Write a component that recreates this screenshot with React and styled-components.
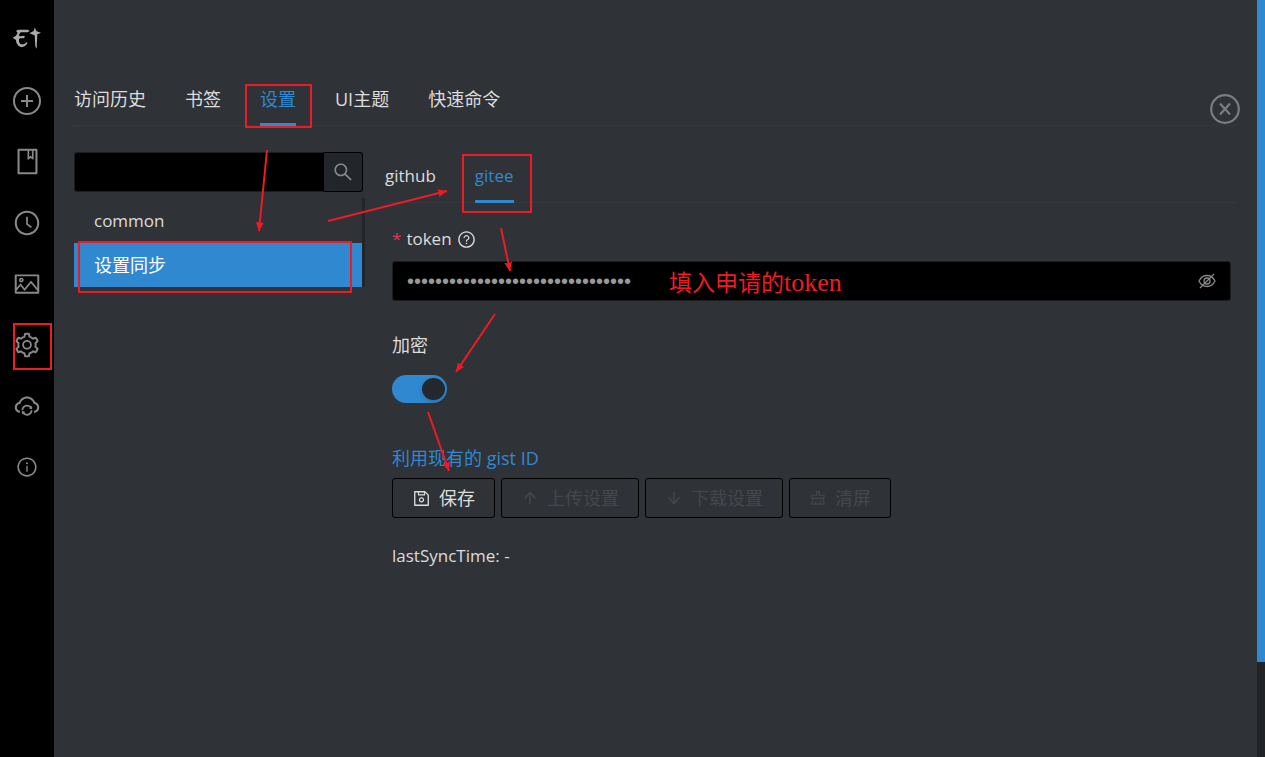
import React, { useState } from "react";
import styled, { createGlobalStyle, css } from "styled-components";
import {
  AiOutlineBook,
  AiOutlineClockCircle,
  AiOutlinePicture,
  AiOutlineSetting,
  AiOutlineCloudSync,
  AiOutlineInfoCircle,
  AiOutlineSearch,
  AiOutlineQuestionCircle,
  AiOutlineSave,
  AiOutlineArrowUp,
  AiOutlineArrowDown,
  AiOutlineClear,
} from "react-icons/ai";

const color = {
  black: "#000",
  main: "#2f3237",
  darker: "#22252a",
  line: "#35383d",
  text: "#ddd",
  muted: "#888",
  disabled: "#45484b",
  primary: "#3088d0",
  red: "#ed1c24",
};

const GlobalStyle = createGlobalStyle`
  * { box-sizing: border-box; }
  body {
    margin: 0;
    background: ${color.main};
    color: ${color.text};
    font: 18px/28px "Open Sans", "Noto Sans CJK SC", sans-serif;
  }
  button, input { font: inherit; color: inherit; margin: 0; }
  svg { display: block; flex: none; }
`;

const Page = styled.div`
  position: relative;
  display: flex;
  min-height: 100vh;
`;

const Sidebar = styled.nav`
  flex: none;
  width: 54px;
  background: ${color.black};
  display: flex;
  flex-direction: column;
`;

const LogoLink = styled.a`
  height: 70px;
  padding: 27px 0 0 12px;
`;

const SideButton = styled.button`
  height: 61px;
  padding: 0;
  border: 0;
  background: none;
  color: ${color.muted};
  display: flex;
  align-items: center;
  justify-content: center;
`;

const Content = styled.main`
  position: relative;
  flex: 1;
  min-width: 0;
  padding: 73px 20px 40px;
`;

const ScrollTrack = styled.div`
  flex: none;
  width: 8px;
  background: #222327;
`;

const ScrollThumb = styled.div`
  height: 87.5%;
  background: ${color.primary};
`;

const TabBar = styled.div`
  display: flex;
  gap: 39px;
  border-bottom: 1px solid ${color.line};
`;

const Tab = styled.button`
  position: relative;
  height: 52px;
  padding: 0;
  border: 0;
  background: none;
  white-space: nowrap;
  ${(p) =>
    p.$active &&
    css`
      color: ${color.primary};
      &::after {
        content: "";
        position: absolute;
        left: 0;
        right: 0;
        bottom: -1px;
        height: 3px;
        background: ${color.primary};
      }
    `}
`;

const CloseButton = styled.button`
  position: absolute;
  top: 94px;
  right: 17px;
  padding: 0;
  border: 0;
  background: none;
  color: #7c7d7f;
`;

const Columns = styled.div`
  display: flex;
  gap: 20px;
  padding-top: 26px;
`;

const ListColumn = styled.section`
  flex: none;
  width: 291px;
`;

const SearchBox = styled.form`
  display: flex;
  height: 40px;
  width: 289px;
  margin-bottom: 6px;
`;

const SearchInput = styled.input`
  flex: 1;
  min-width: 0;
  padding: 0 12px;
  background: ${color.black};
  border: 1px solid #1c1d1f;
  border-right: 0;
  border-radius: 3px 0 0 3px;
  outline: 0;
`;

const SearchButton = styled.button`
  width: 39px;
  padding: 0;
  display: flex;
  align-items: center;
  justify-content: center;
  color: ${color.muted};
  background: ${color.darker};
  border: 1px solid ${color.black};
  border-left: 0;
  border-radius: 0 3px 3px 0;
`;

const ItemList = styled.div`
  display: flex;
  flex-direction: column;
  padding-top: 1px;
  border-right: 3px solid ${color.darker};
`;

const Item = styled.button`
  height: 44px;
  padding: 0 20px;
  border: 0;
  text-align: left;
  font-size: ${(p) => (p.$latin ? "17px" : "18px")};
  color: ${(p) => (p.$active ? "#fff" : color.text)};
  background: ${(p) => (p.$active ? color.primary : "none")};
`;

const Detail = styled.section`
  flex: 1;
  min-width: 0;
`;

const DetailTabs = styled(TabBar)`
  height: 51px;
`;

const DetailTab = styled(Tab)`
  height: 50px;
  padding-bottom: 3px;
  font-size: 17px;
`;

const Form = styled.form`
  display: flex;
  flex-direction: column;
  align-items: flex-start;
  padding: 22px 6px 0 7px;
`;

const Label = styled.label`
  display: flex;
  align-items: center;
  gap: 5px;
  font-size: ${(p) => (p.$latin ? "17px" : "18px")};
`;

const Required = styled.span`
  color: #e0364f;
`;

const TokenField = styled.div`
  display: flex;
  align-items: center;
  width: 100%;
  height: 40px;
  margin: 8px 0 30px;
  padding: 0 14px;
  background: ${color.black};
  border: 1px solid #1c1d1f;
  border-radius: 3px;
`;

const TokenInput = styled.input`
  flex: 1;
  min-width: 0;
  height: 100%;
  padding: 0;
  color: #999;
  font: 20px "Liberation Sans", sans-serif;
  background: none;
  border: 0;
  outline: 0;
`;

const IconButton = styled.button`
  padding: 0;
  border: 0;
  background: none;
  color: ${color.muted};
`;

const Switch = styled.input`
  appearance: none;
  width: 55px;
  height: 28px;
  padding: 3px 2px;
  margin: 16px 0 41px;
  border-radius: 14px;
  display: flex;
  background: ${(p) => (p.checked ? color.primary : color.darker)};
  justify-content: ${(p) => (p.checked ? "flex-end" : "flex-start")};
  &::before {
    content: "";
    width: 23px;
    height: 22px;
    border-radius: 50%;
    background: ${(p) => (p.checked ? "#22282d" : color.muted)};
    box-shadow: 0 2px 4px rgba(0, 35, 11, 0.2);
  }
`;

const GistLink = styled.a`
  color: ${color.primary};
  text-decoration: none;
`;

const ButtonRow = styled.div`
  display: flex;
  gap: 6px;
  margin: 6px 0 24px;
`;

const ActionButton = styled.button`
  display: flex;
  align-items: center;
  gap: 8px;
  height: 40px;
  padding: 0 19px;
  background: none;
  border: 1px solid ${color.black};
  border-radius: 3px;
  white-space: nowrap;
  &:disabled { color: ${color.disabled}; }
`;

const SyncTime = styled.div`
  font-size: 17px;
`;

const Markup = styled.svg`
  position: absolute;
  top: 0;
  left: 0;
  pointer-events: none;
`;

const Note = styled.div`
  position: absolute;
  top: 268px;
  left: 669px;
  display: flex;
  align-items: baseline;
  color: ${color.red};
  font-size: 23px;
  pointer-events: none;
`;

const NoteLatin = styled.span`
  font-family: "Liberation Serif", serif;
  font-size: 26px;
`;

function Logo() {
  return (
    <svg width="30" height="23" viewBox="36 82 90 69" fill="#aaa">
      <path d="M48 94 L55 90 L84 90 L89 94 L83 98 L62 98 L56 106 L60 110 L72 108 L75 112 L71 116 L60 116 L57 119 L57 127 L62 134 L72 134 L81 127 L82 132 L74 140 L64 143 L55 138 L49 129 L48 121 L38 114 L48 108 L53 99 Z" />
      <path d="M104 84 L110 95 L123 99 L112 104 L110 147 L106 141 L104 107 L88 101 L101 94 Z" />
    </svg>
  );
}

function PlusIcon() {
  return (
    <svg width="28" height="28" viewBox="0 0 28 28" fill="none" stroke="currentColor" strokeWidth="2">
      <circle cx="14" cy="14" r="13" />
      <path d="M14 8v12M8 14h12" />
    </svg>
  );
}

function CloseIcon() {
  return (
    <svg width="30" height="30" viewBox="0 0 30 30" fill="none" stroke="currentColor" strokeWidth="2.2">
      <circle cx="15" cy="15" r="13.8" />
      <path d="M10 9.500l10 11M20 9.500l-10 11" />
    </svg>
  );
}

function EyeOffIcon() {
  return (
    <svg width="18" height="18" viewBox="0 0 18 18" fill="none" stroke="currentColor" strokeWidth="1.3">
      <path d="M1 9C3 5 6 3.500 9 3.500S15 5 17 9c-2 4-5 5.500-8 5.500S3 13 1 9z" />
      <circle cx="9" cy="9" r="3" />
      <path d="M2 16L16 2" />
    </svg>
  );
}

const sideItems = [
  ["新建", <PlusIcon />],
  ["书签", <AiOutlineBook size={29} />],
  ["历史", <AiOutlineClockCircle size={28} />],
  ["主题", <AiOutlinePicture size={28} />],
  ["设置", <AiOutlineSetting size={28} />],
  ["同步", <AiOutlineCloudSync size={28} />],
  ["关于", <AiOutlineInfoCircle size={22} />],
];

const boxes = [
  [246, 85, 65, 42],
  [79, 242, 272, 50],
  [463, 155, 68, 57],
  [14, 324, 37, 45],
];

const arrows = [
  [267, 150, 259, 231],
  [328, 221, 447, 191],
  [501, 228, 510, 271],
  [495, 314, 456, 372],
  [428, 412, 449, 471],
];

function Annotations() {
  return (
    <Markup width="900" height="500" fill="none" stroke={color.red} strokeWidth="2" aria-hidden="true">
      <defs>
        <marker id="head" markerUnits="userSpaceOnUse" markerWidth="10" markerHeight="8" refX="9" refY="4" orient="auto">
          <path d="M0 0L9 4L0 8L1 4Z" fill={color.red} stroke="none" />
        </marker>
      </defs>
      {boxes.map(([x, y, w, h]) => (
        <rect key={x} x={x} y={y} width={w} height={h} />
      ))}
      {arrows.map(([x1, y1, x2, y2]) => (
        <line key={x1} x1={x1} y1={y1} x2={x2} y2={y2} markerEnd="url(#head)" />
      ))}
    </Markup>
  );
}

export default function App() {
  const [tab, setTab] = useState("设置");
  const [item, setItem] = useState("设置同步");
  const [service, setService] = useState("gitee");
  const [encrypt, setEncrypt] = useState(true);
  const [hidden, setHidden] = useState(true);

  return (
    <Page>
      <GlobalStyle />
      <Sidebar>
        <LogoLink href="#" aria-label="electerm">
          <Logo />
        </LogoLink>
        {sideItems.map(([name, icon]) => (
          <SideButton key={name} aria-label={name}>
            {icon}
          </SideButton>
        ))}
      </Sidebar>
      <Content>
        <TabBar role="tablist">
          {["访问历史", "书签", "设置", "UI主题", "快速命令"].map((t) => (
            <Tab key={t} role="tab" $active={t === tab} aria-selected={t === tab} onClick={() => setTab(t)}>
              {t}
            </Tab>
          ))}
        </TabBar>
        <CloseButton aria-label="关闭">
          <CloseIcon />
        </CloseButton>
        <Columns>
          <ListColumn>
            <SearchBox onSubmit={(e) => e.preventDefault()}>
              <SearchInput type="text" aria-label="搜索" />
              <SearchButton aria-label="搜索">
                <AiOutlineSearch size={22} />
              </SearchButton>
            </SearchBox>
            <ItemList>
              {["common", "设置同步"].map((t) => (
                <Item key={t} $latin={t === "common"} $active={t === item} onClick={() => setItem(t)}>
                  {t}
                </Item>
              ))}
            </ItemList>
          </ListColumn>
          <Detail>
            <DetailTabs role="tablist">
              {["github", "gitee"].map((t) => (
                <DetailTab key={t} role="tab" $active={t === service} aria-selected={t === service} onClick={() => setService(t)}>
                  {t}
                </DetailTab>
              ))}
            </DetailTabs>
            <Form onSubmit={(e) => e.preventDefault()}>
              <Label htmlFor="token" $latin>
                <Required>*</Required>
                token
                <AiOutlineQuestionCircle size={19} />
              </Label>
              <TokenField>
                <TokenInput
                  id="token"
                  type={hidden ? "password" : "text"}
                  defaultValue="0123456789abcdef0123456789abcdef"
                />
                <IconButton type="button" aria-label="显示" onClick={() => setHidden(!hidden)}>
                  <EyeOffIcon />
                </IconButton>
              </TokenField>
              <Label htmlFor="encrypt">加密</Label>
              <Switch id="encrypt" type="checkbox" role="switch" checked={encrypt} onChange={() => setEncrypt(!encrypt)} />
              <GistLink href="#">利用现有的 gist ID</GistLink>
              <ButtonRow>
                <ActionButton type="submit">
                  <AiOutlineSave size={19} />
                  保存
                </ActionButton>
                <ActionButton type="button" disabled>
                  <AiOutlineArrowUp size={18} />
                  上传设置
                </ActionButton>
                <ActionButton type="button" disabled>
                  <AiOutlineArrowDown size={18} />
                  下载设置
                </ActionButton>
                <ActionButton type="button" disabled>
                  <AiOutlineClear size={18} />
                  清屏
                </ActionButton>
              </ButtonRow>
              <SyncTime>lastSyncTime: -</SyncTime>
            </Form>
          </Detail>
        </Columns>
      </Content>
      <ScrollTrack>
        <ScrollThumb />
      </ScrollTrack>
      <Annotations />
      <Note>
        填入申请的<NoteLatin>token</NoteLatin>
      </Note>
    </Page>
  );
}
